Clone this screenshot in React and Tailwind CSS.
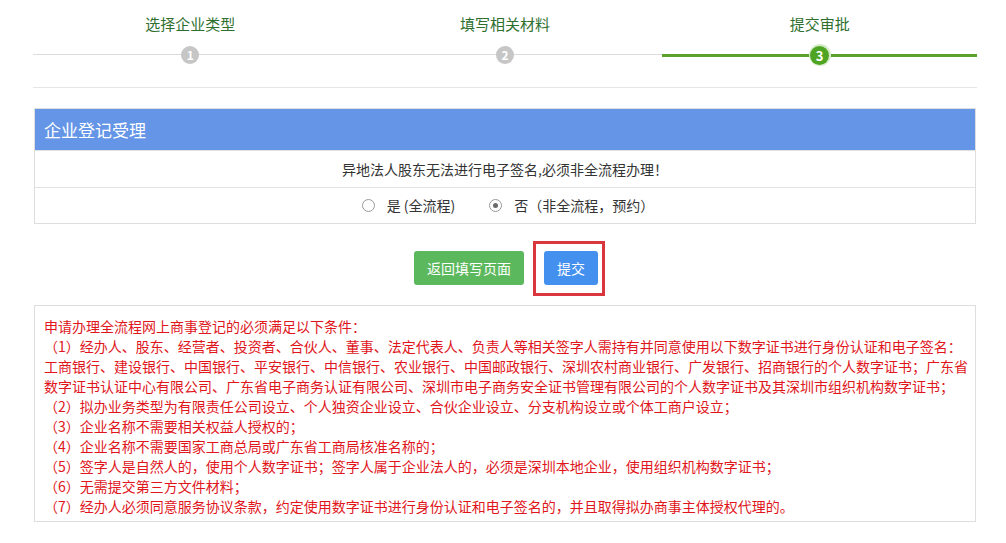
import React from "react";

const FONT = { fontFamily: '"Noto Sans CJK SC", "Microsoft YaHei", "Liberation Sans", sans-serif' };

function Step({ label, num, active }) {
  return (
    <div className="flex flex-col items-center">
      <div className="mt-[14px] h-[20px] text-[15px] leading-[20px] text-[#2f6f2f]">{label}</div>
      <div className="relative mt-[10px] flex h-[22px] w-full items-center justify-center">
        <div
          className={
            active
              ? "absolute left-0 right-0 top-[10px] h-[3px] bg-[#5ba12b]"
              : "absolute left-0 right-0 top-[10px] h-px bg-[#dcdcdc]"
          }
        />
        {active ? (
          <div className="relative flex h-[22px] w-[22px] items-center justify-center rounded-full bg-[#d7eccb]">
            <div className="flex h-[19px] w-[19px] items-center justify-center rounded-full bg-[#4fa523] text-[13px] font-bold leading-none text-white">
              {num}
            </div>
          </div>
        ) : (
          <div className="relative flex h-[18px] w-[18px] items-center justify-center rounded-full bg-[#c6c6c6] text-[12px] font-bold leading-none text-white">
            {num}
          </div>
        )}
      </div>
    </div>
  );
}

function Radio({ checked, label }) {
  return (
    <div className="flex items-center">
      <span className="flex h-[13px] w-[13px] items-center justify-center rounded-full border border-[#9a9a9a] bg-white">
        {checked && <span className="h-[5px] w-[5px] rounded-full bg-[#6a6a6a]" />}
      </span>
      <span className="ml-[12px] text-[14px] text-[#333]">{label}</span>
    </div>
  );
}

const lines = [
  "申请办理全流程网上商事登记的必须满足以下条件：",
  "（1）经办人、股东、经营者、投资者、合伙人、董事、法定代表人、负责人等相关签字人需持有并同意使用以下数字证书进行身份认证和电子签名：",
  "工商银行、建设银行、中国银行、平安银行、中信银行、农业银行、中国邮政银行、深圳农村商业银行、广发银行、招商银行的个人数字证书；广东省",
  "数字证书认证中心有限公司、广东省电子商务认证有限公司、深圳市电子商务安全证书管理有限公司的个人数字证书及其深圳市组织机构数字证书；",
  "（2）拟办业务类型为有限责任公司设立、个人独资企业设立、合伙企业设立、分支机构设立或个体工商户设立；",
  "（3）企业名称不需要相关权益人授权的；",
  "（4）企业名称不需要国家工商总局或广东省工商局核准名称的；",
  "（5）签字人是自然人的，使用个人数字证书；签字人属于企业法人的，必须是深圳本地企业，使用组织机构数字证书；",
  "（6）无需提交第三方文件材料；",
  "（7）经办人必须同意服务协议条款，约定使用数字证书进行身份认证和电子签名的，并且取得拟办商事主体授权代理的。",
];

export default function App() {
  return (
    <div className="min-h-[543px] w-full bg-white [text-spacing-trim:space-all]" style={FONT}>
      <div className="ml-[33px] mr-[29px] h-[88px] border-b border-[#e6e6e6]">
        <div className="grid grid-cols-3">
          <Step label="选择企业类型" num="1" />
          <Step label="填写相关材料" num="2" />
          <Step label="提交审批" num="3" active />
        </div>
      </div>

      <div className="ml-[34px] mr-[30px] mt-[20px] border border-[#dedede]">
        <div className="flex h-[41px] items-center bg-[#6495e6] pl-[9px] text-[17px] text-white">企业登记受理</div>
        <div className="flex h-[37px] items-center justify-center border-t border-[#e3e3e3] text-[14px] text-[#333]">
          异地法人股东无法进行电子签名,必须非全流程办理！
        </div>
        <div className="flex h-[36px] items-center justify-center gap-[34px] border-t border-[#e3e3e3] pl-[6px]">
          <Radio label="是 (全流程)" />
          <Radio checked label="否（非全流程，预约）" />
        </div>
      </div>

      <div className="mt-[27px] flex justify-center gap-[20px] pl-[6px]">
        <button className="h-[34px] w-[110px] rounded-[3px] bg-[#5cb85c] text-[14px] text-white">返回填写页面</button>
        <div className="relative">
          <button className="h-[34px] w-[54px] rounded-[3px] bg-[#4390ee] text-[14px] text-white">提交</button>
          <div className="pointer-events-none absolute left-[-11px] top-[-10px] h-[55px] w-[72px] border-[3px] border-[#d9363e]" />
        </div>
      </div>

      <div className="ml-[34px] mr-[30px] mt-[20px] border border-[#dedede] pb-[5px] pl-[9px] pt-[10px]">
        {lines.map((l, i) => (
          <div key={i} className="whitespace-nowrap text-[14px] leading-[20px] text-[#e0161c]">
            {l}
          </div>
        ))}
      </div>
    </div>
  );
}
